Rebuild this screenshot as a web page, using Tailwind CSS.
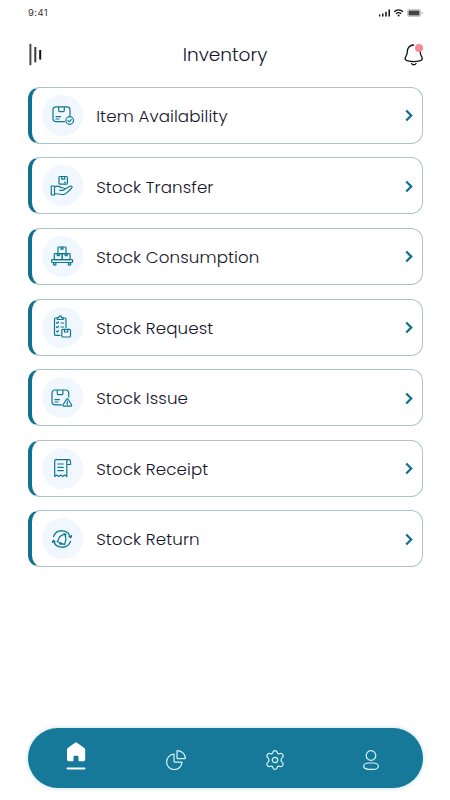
<!DOCTYPE html>
<html lang="en">
<head>
    <meta charset="UTF-8">
    <meta name="viewport" content="width=device-width, initial-scale=1.0">
    <title>Inventory</title>
    <script src="https://cdn.jsdelivr.net/npm/@tailwindcss/browser@4"></script>
</head>
<body class="bg-white">
    <div class="w-[450px] h-[800px] overflow-hidden flex flex-col pl-7 pr-[27px] font-light font-[Poppins,Inter,sans-serif] text-[#15152a]">
        <!-- Status bar -->
        <div class="h-[26px] shrink-0 flex items-center justify-between">
            <span class="text-[9.5px] leading-none font-normal tracking-[0.4px] text-[#333] font-[Inter,sans-serif]">9:41</span>
            <svg class="w-11 h-2.5" viewBox="0 0 44 10" fill="none">
                <path d="M.6 8.500V6.600M3.800 8.500V5.400M7 8.500V3.800M10.200 8.500V1.600" stroke="#111" stroke-width="1.500"/>
                <path d="M15.200 3.800c2.600-2.400 6.200-2.400 8.800 0M17 5.700c1.600-1.400 3.600-1.400 5.200 0" stroke="#111" stroke-width="1.300"/>
                <circle cx="19.600" cy="7.500" r="1" fill="#111"/>
                <rect x="28.500" y="1.500" width="13" height="7" rx="1.500" stroke="#bbb" stroke-width=".8"/>
                <rect x="29.500" y="2.500" width="11" height="5" rx=".5" fill="#444"/>
                <path d="M43 4v2" stroke="#aaa"/>
            </svg>
        </div>

        <!-- Header -->
        <div class="h-[58px] shrink-0 flex items-center justify-between">
            <svg class="w-6 h-6" viewBox="0 0 24 24" fill="none" stroke-width="2">
                <path d="M2.400 .8v21.400" stroke="#4a4a4a"/>
                <path d="M7.300 4v15.300" stroke="#3a3a3a"/>
                <path d="M12.200 7v9.600" stroke="#111"/>
            </svg>
            <h1 class="text-[18.5px] leading-none -ml-px">Inventory</h1>
            <svg class="w-6 h-6" viewBox="0 0 24 24" fill="none" stroke="#111" stroke-width="1.300" stroke-linecap="round" stroke-linejoin="round">
                <path d="M14.600 2C10.600 2 8.300 5 8.300 8.700c0 2.700-.5 3.400-1.500 4.900-1.500 2.300-.3 3.600 2 4.200 3.700 1 8.200 1 11.900 0 2.300-.6 3.300-1.900 1.900-4.200-.9-1.500-1.400-2.200-1.400-4.900"/>
                <path d="M12.600 20.600c1 1.500 3.300 1.500 4.400 0"/>
                <circle cx="20" cy="5" r="4" fill="#f28b8f" stroke="none"/>
            </svg>
        </div>

        <!-- Menu -->
        <div class="mt-[2.9px] flex flex-col gap-[13.55px] text-[16.7px] leading-none tracking-[0.1px]">
            <a href="#" class="h-[57px] flex items-center rounded-xl border border-[#a9c3cc] border-l-4 border-l-[#10728e] pl-[9.5px] pr-2">
                <span class="w-[41px] h-[41px] rounded-full bg-[#f1f7fe] flex items-center justify-center">
                    <svg class="w-6 h-6" viewBox="0 0 24 24" fill="none" stroke="#0f788e" stroke-width="1.200" stroke-linecap="round" stroke-linejoin="round">
                        <path d="M14.500 18.700H6a3 3 0 0 1-3-3V6.800a3 3 0 0 1 3-3h11a3 3 0 0 1 3 3v5.700M8.700 4v3.600a1 1 0 0 0 1 1h3.600a1 1 0 0 0 1-1V4M6 13.700h4.500M6 16h3"/>
                        <circle cx="19.700" cy="17.500" r="3.800"/>
                        <path d="m18 17.600 1.200 1.200 2.100-2.200"/>
                    </svg>
                </span>
                <span class="ml-[13.7px] pt-0.5 flex-1">Item Availability</span>
                <svg class="w-2.5 h-3.5" viewBox="0 0 10 14" fill="none" stroke="#10728e" stroke-width="2.300"><path d="M2.200 2.500 7.200 7.500l-5 5"/></svg>
            </a>
            <a href="#" class="h-[57px] flex items-center rounded-xl border border-[#a9c3cc] border-l-4 border-l-[#10728e] pl-[9.5px] pr-2">
                <span class="w-[41px] h-[41px] rounded-full bg-[#f1f7fe] flex items-center justify-center">
                    <svg class="w-6 h-6" viewBox="0 0 24 24" fill="none" stroke="#0f788e" stroke-width="1.200" stroke-linecap="round" stroke-linejoin="round">
                        <rect x="9" y="2.500" width="8.400" height="7.700" rx="1"/>
                        <path d="M11.700 2.500v2.700h3V2.500M14.500 8.300h1"/>
                        <path d="M1.300 12h3.200v9H1.300zM4.500 13c2.500-1.300 4.500-1 6 .2 1 .8 3.500.3 4 1.300.5 1.200-.7 1.800-2 1.800H9.700M14.600 15.300l5.300-3c1.500-.8 3 .5 1.700 1.900l-5.500 5.200c-1.200 1-2.500 1.300-4 1.100l-7.600-1"/>
                    </svg>
                </span>
                <span class="ml-[13.7px] pt-0.5 flex-1">Stock Transfer</span>
                <svg class="w-2.5 h-3.5" viewBox="0 0 10 14" fill="none" stroke="#10728e" stroke-width="2.300"><path d="M2.200 2.500 7.200 7.500l-5 5"/></svg>
            </a>
            <a href="#" class="h-[57px] flex items-center rounded-xl border border-[#a9c3cc] border-l-4 border-l-[#10728e] pl-[9.5px] pr-2">
                <span class="w-[41px] h-[41px] rounded-full bg-[#f1f7fe] flex items-center justify-center">
                    <svg class="w-6 h-6" viewBox="0 0 24 24" fill="none" stroke="#0f788e" stroke-width="1.200" stroke-linecap="round" stroke-linejoin="round">
                        <rect x="8" y="3" width="8" height="6.700" rx=".6"/>
                        <rect x="4.300" y="9.700" width="7.900" height="6" rx=".6"/>
                        <rect x="12.200" y="9.700" width="7.900" height="6" rx=".6"/>
                        <path d="M11 3v2.200h2V3M7.300 9.700v2h2v-2M15.200 9.700v2h2v-2"/>
                        <rect x="1.600" y="15.700" width="21" height="2.800" rx=".8"/>
                        <circle cx="4.700" cy="19.900" r="1.300"/>
                        <circle cx="19.500" cy="19.900" r="1.300"/>
                    </svg>
                </span>
                <span class="ml-[13.7px] pt-0.5 flex-1">Stock Consumption</span>
                <svg class="w-2.5 h-3.5" viewBox="0 0 10 14" fill="none" stroke="#10728e" stroke-width="2.300"><path d="M2.200 2.500 7.200 7.500l-5 5"/></svg>
            </a>
            <a href="#" class="h-[57px] flex items-center rounded-xl border border-[#a9c3cc] border-l-4 border-l-[#10728e] pl-[9.5px] pr-2">
                <span class="w-[41px] h-[41px] rounded-full bg-[#f1f7fe] flex items-center justify-center">
                    <svg class="w-6 h-6" viewBox="0 0 24 24" fill="none" stroke="#0f788e" stroke-width="1.200" stroke-linecap="round" stroke-linejoin="round">
                        <path d="M10 20.300H5.500a1 1 0 0 1-1-1V4a1 1 0 0 1 1-1H7M13.300 3H15a1 1 0 0 1 1 1v8.500"/>
                        <path d="M7.300 4.500V2.700h1.500c0-2.500 2.800-2.500 2.800 0h1.600v1.800z"/>
                        <path d="m6.500 7.700.8.700 1.200-1.400M6.500 12l.8.700 1.200-1.400M6.500 16.300l.8.700 1.200-1.400M11 8h2.700M11 12h2.700"/>
                        <rect x="11.800" y="14.300" width="8.700" height="7.700" rx="1"/>
                        <path d="M14.500 14.300v2.700h3.200v-2.700"/>
                    </svg>
                </span>
                <span class="ml-[13.7px] pt-0.5 flex-1">Stock Request</span>
                <svg class="w-2.5 h-3.5" viewBox="0 0 10 14" fill="none" stroke="#10728e" stroke-width="2.300"><path d="M2.200 2.500 7.200 7.500l-5 5"/></svg>
            </a>
            <a href="#" class="h-[57px] flex items-center rounded-xl border border-[#a9c3cc] border-l-4 border-l-[#10728e] pl-[9.5px] pr-2">
                <span class="w-[41px] h-[41px] rounded-full bg-[#f1f7fe] flex items-center justify-center">
                    <svg class="w-6 h-6" viewBox="0 0 24 24" fill="none" stroke="#0f788e" stroke-width="1.200" stroke-linecap="round" stroke-linejoin="round">
                        <path d="M11.500 18.900H5a3 3 0 0 1-3-3V7a3 3 0 0 1 3-3h10.700a3 3 0 0 1 3 3v4M7.300 4v3.700a1 1 0 0 0 1 1h3.600a1 1 0 0 0 1-1V4M5 13.700h4.500M5 16h3"/>
                        <path d="m16.600 13-3.600 6c-.3.600 0 1.200.7 1.200h7.200c.7 0 1-.6.700-1.200l-3.600-6c-.3-.6-1.100-.6-1.400 0zM17.300 15v2.500M17.300 18.600v.1"/>
                    </svg>
                </span>
                <span class="ml-[13.7px] pt-0.5 flex-1">Stock Issue</span>
                <svg class="w-2.5 h-3.5" viewBox="0 0 10 14" fill="none" stroke="#10728e" stroke-width="2.300"><path d="M2.200 2.500 7.200 7.500l-5 5"/></svg>
            </a>
            <a href="#" class="h-[57px] flex items-center rounded-xl border border-[#a9c3cc] border-l-4 border-l-[#10728e] pl-[9.5px] pr-2">
                <span class="w-[41px] h-[41px] rounded-full bg-[#f1f7fe] flex items-center justify-center">
                    <svg class="w-6 h-6" viewBox="0 0 24 24" fill="none" stroke="#0f788e" stroke-width="1.200" stroke-linecap="round" stroke-linejoin="round">
                        <path d="M18.600 3.700H6a1.300 1.300 0 0 0-1.300 1.300v15.500l2-1.400 2 1.400 2-1.400 2 1.400 2-1.400 2.100 1.400V5.500c0-2.400 3.700-2.400 3.700 0v3h-3.700"/>
                        <path d="M7.800 8h5.500M7.800 11.300h5.500M7.800 14.600h5.500"/>
                    </svg>
                </span>
                <span class="ml-[13.7px] pt-0.5 flex-1">Stock Receipt</span>
                <svg class="w-2.5 h-3.5" viewBox="0 0 10 14" fill="none" stroke="#10728e" stroke-width="2.300"><path d="M2.200 2.500 7.200 7.500l-5 5"/></svg>
            </a>
            <a href="#" class="h-[57px] flex items-center rounded-xl border border-[#a9c3cc] border-l-4 border-l-[#10728e] pl-[9.5px] pr-2">
                <span class="w-[41px] h-[41px] rounded-full bg-[#f1f7fe] flex items-center justify-center">
                    <svg class="w-6 h-6" viewBox="0 0 24 24" fill="none" stroke="#0f788e" stroke-width="1.300" stroke-linecap="round" stroke-linejoin="round">
                        <path d="M3.500 9.500A9 9 0 0 1 20.600 10.500M20.500 14.500A9 9 0 0 1 3.400 13.500"/>
                        <path d="m18.900 9.300 1.700 1.300 1-1.900M2.400 15.300l1-1.900 1.700 1.300"/>
                        <path d="m14.800 7-4 1.900c-1.700.8-1.600 2.200-2.600 4.100l-1 1.500 7.200 3.200.6-1.800c.4-2 1.400-2.800.9-4.500zM14 6.600l2 1M9.700 15.700c-.2 1.500 1 2 1.900 1"/>
                    </svg>
                </span>
                <span class="ml-[13.7px] pt-0.5 flex-1">Stock Return</span>
                <svg class="w-2.5 h-3.5" viewBox="0 0 10 14" fill="none" stroke="#10728e" stroke-width="2.300"><path d="M2.200 2.500 7.200 7.500l-5 5"/></svg>
            </a>
        </div>

        <!-- Bottom navigation -->
        <nav class="mt-auto mb-[12.4px] h-[60px] shrink-0 flex items-center justify-between pl-[38px] pr-[41.5px] rounded-full bg-[#17799a] shadow-[0_0_5px_#17799a40]">
            <a href="#" class="-mt-[3px]">
                <svg class="w-5 h-7" viewBox="0 0 20 28" fill="none">
                    <path d="M9 .8c.6-.4 1.400-.4 2 0l7 5c.8.600 1.200 1.200 1.200 2.200v9c0 1.500-.8 2.300-2.300 2.300h-3.400c-.6 0-1-.4-1-1V15c0-.8-.4-1.300-1.200-1.300H8.700c-.8 0-1.200.5-1.200 1.300v3.300c0 .6-.4 1-1 1H3.200C1.700 19.300 1 18.500 1 17V8c0-1 .3-1.600 1.100-2.200z" fill="#fff"/>
                    <path d="M1.500 26.500h17" stroke="#fff" stroke-width="2" stroke-linecap="round"/>
                </svg>
            </a>
            <a href="#" class="mt-1">
                <svg class="w-5 h-5" viewBox="0 0 20 20" fill="none" stroke="#d8f4f8" stroke-width="1.200" stroke-linejoin="round">
                    <path d="M8 4.200a7.700 7.700 0 1 0 8 8H9.200c-.8 0-1.200-.4-1.200-1.200z"/>
                    <path d="M11 1.300c0-.5.300-.8.800-.7 4 .3 7.200 3.300 7.600 7.300 0 .5-.2.800-.7.800H12c-.7 0-1-.3-1-1z"/>
                </svg>
            </a>
            <a href="#" class="mt-1">
                <svg class="w-5 h-5" viewBox="0 0 20 20" fill="none" stroke="#d8f4f8" stroke-width="1.200" stroke-linejoin="round">
                    <path d="M7.700 2.600C8 1.200 8.800.6 10 .6s2 .6 2.300 2c.2 1 1 1.400 2 1.100 1.700-.6 2.800-.2 3.500 1s.3 2.300-.8 3.200c-1.300 1.100-1.300 3.100 0 4.200 1.100.9 1.500 2 .8 3.200s-1.800 1.600-3.500 1c-1-.3-1.800.1-2 1.100-.3 1.400-1.100 2-2.300 2s-2-.6-2.300-2c-.2-1-1-1.400-2-1.100-1.700.6-2.800.2-3.500-1s-.3-2.300.8-3.200c1.300-1.100 1.300-3.100 0-4.200-1.100-.9-1.500-2-.8-3.200s1.800-1.600 3.500-1c1 .3 1.800-.1 2-1.100z"/>
                    <circle cx="10" cy="10" r="2.700"/>
                </svg>
            </a>
            <a href="#" class="mt-1 -ml-[3.5px]">
                <svg class="w-5 h-5" viewBox="0 0 20 20" fill="none" stroke="#d8f4f8" stroke-width="1.200">
                    <circle cx="10" cy="5.500" r="4.800"/>
                    <rect x="2.600" y="13" width="14.800" height="6.300" rx="5" ry="3.150"/>
                </svg>
            </a>
        </nav>
    </div>
</body>
</html>
